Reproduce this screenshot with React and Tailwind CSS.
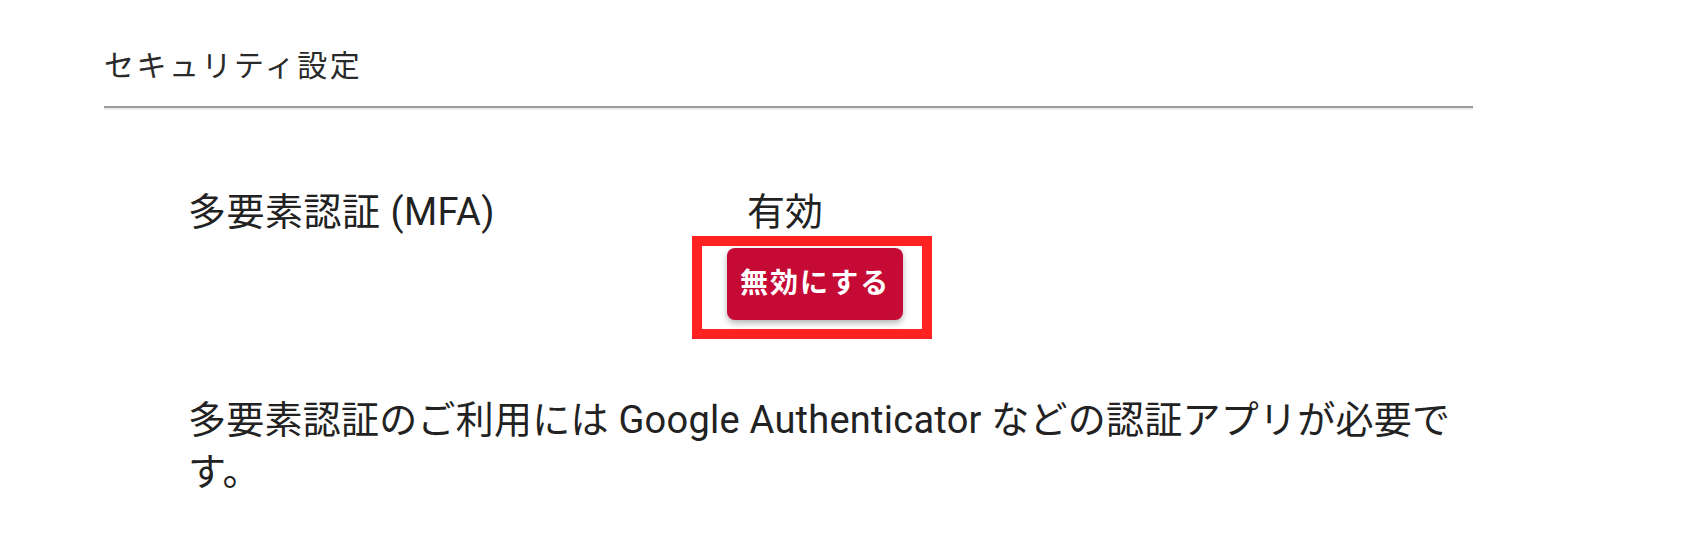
export default function App() {
  const font = { fontFamily: 'Roboto, "Noto Sans CJK JP", sans-serif' };
  return (
    <div className="w-[1684px] h-[550px] bg-white text-[#222222] overflow-hidden" style={font}>
      <div className="pl-[104px] w-[1473px] pt-[40px]">
        <h2 className="text-[30px] leading-[52px] font-normal tracking-[2.5px] text-[#2a2a2a]">セキュリティ設定</h2>
        <div className="mt-[14px] border-t-2 border-b-2 border-t-[#9a9a9a] border-b-[#ececec]" />
        <div className="pl-[84px] pt-[76px]">
          <div className="flex">
            <div className="w-[539px] text-[38px] leading-[52px] tracking-[0.5px]">多要素認証 (MFA)</div>
            <div className="flex flex-col items-start">
              <div className="pl-[20px] text-[38px] leading-[52px]">有効</div>
              <div className="relative mt-[10px]">
                <button className="h-[72px] px-[13px] rounded-[8px] bg-[#c50a35] text-white text-[28px] font-bold tracking-[2px] shadow-[0_3px_6px_rgba(0,0,0,0.3)]">
                  無効にする
                </button>
                <div className="absolute left-[-35px] top-[-12px] right-[-29px] bottom-[-19px] border-[10px] border-[#ff2222] pointer-events-none" />
              </div>
            </div>
          </div>
          <p className="mt-[74px] w-[1280px] text-[38px] leading-[52px] tracking-[0.25px]">
            多要素認証のご利用には Google Authenticator などの認証アプリが必要です。
          </p>
        </div>
      </div>
    </div>
  );
}
